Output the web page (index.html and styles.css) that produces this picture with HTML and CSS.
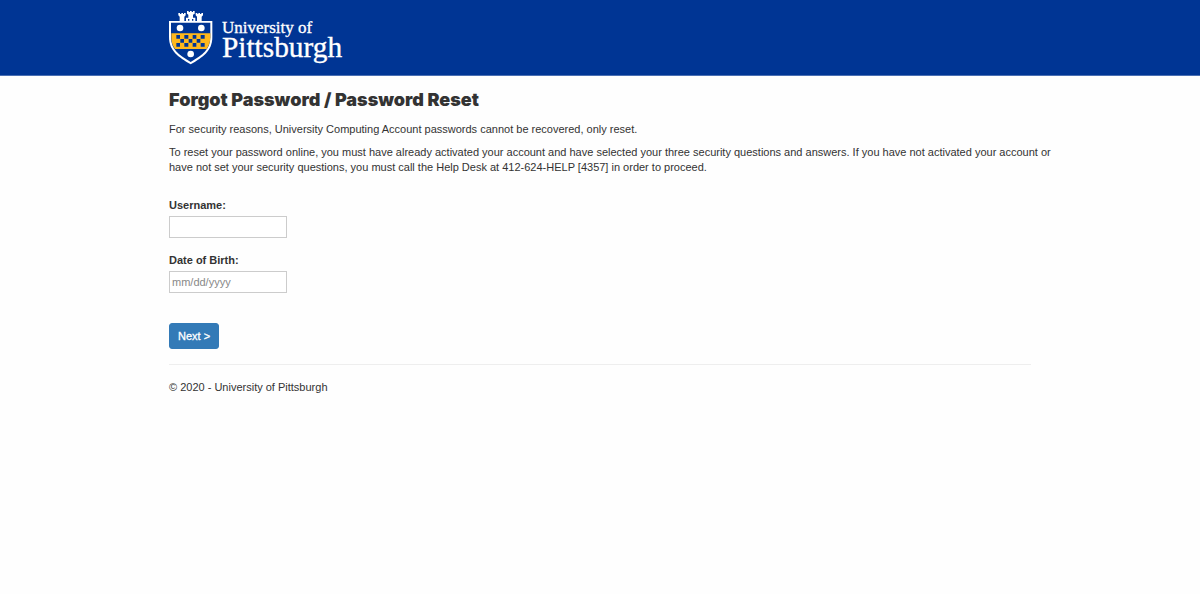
FILE: index.html
```html
<!DOCTYPE html>
<html lang="en">
<head>
<meta charset="utf-8">
<title>Forgot Password / Password Reset</title>
<link rel="stylesheet" href="styles.css">
</head>
<body>
<header class="site-header">
  <div class="container">
    <svg class="logo" viewBox="27 33 534 162" role="img" aria-label="University of Pittsburgh">
      <path fill="#fff" d="M27 63h130v48c0 42-28 60-65 82c-37-22-65-40-65-82z"/>
      <path fill="#fff" d="M55 39h5v3h4v-3h5v3h3v-3h5v7l-4 4v13H59V50l-4-4zM107 39h5v3h3v-3h5v3h4v-3h5v7l-4 4v13h-14V50l-4-4zM81 33h5v3h4v-3h5v3h4v-3h5v8l-5 3v9h7v11H78V53h7v-9l-4-3z"/>
      <path fill="#003594" d="M33 68h118v44c0 37-23 52-59 74C56 164 33 149 33 112z"/>
      <path fill="#ffb81c" d="M34 100h117v12c0 14-4 25-11 35H45c-8-10-11-21-11-35z"/>
      <path fill="#003594" d="M49 105h11v11H49zM73 105h12v11H73zM98 105h11v11H98zM122 105h12v11h-12zM61 117h11v11H61zM86 117h11v11H86zM110 117h11v11h-11zM49 129h11v11H49zM73 129h12v11H73zM98 129h11v11H98zM122 129h12v11h-12zM84 57h4v5h-4zM96 57h4v5h-4z"/>
      <g fill="#fff"><circle cx="60" cy="84" r="10"/><circle cx="124" cy="84" r="10"/><circle cx="92" cy="162" r="10"/></g>
      <text class="logo-text" x="186" y="100" font-size="51">University of</text>
      <text class="logo-text" x="186" y="171" font-size="88">Pittsburgh</text>
    </svg>
  </div>
</header>
<main class="container">
  <h1 class="title">Forgot Password / Password Reset</h1>
  <p class="text">For security reasons, University Computing Account passwords cannot be recovered, only reset.</p>
  <p class="text">To reset your password online, you must have already activated your account and have selected your three security questions and answers. If you have not activated your account or have not set your security questions, you must call the Help Desk at 412-624-HELP [4357] in order to proceed.</p>
  <form class="form">
    <div class="field">
      <label class="label" for="username">Username:</label>
      <input class="input" id="username" type="text">
    </div>
    <div class="field">
      <label class="label" for="dob">Date of Birth:</label>
      <input class="input" id="dob" type="text" placeholder="mm/dd/yyyy">
    </div>
    <button class="button" type="submit">Next &gt;</button>
  </form>
  <footer class="footer">© 2020 - University of Pittsburgh</footer>
</main>
</body>
</html>
```
FILE: styles.css
```css
* { box-sizing: border-box; }
body {
  margin: 0;
  background: #fefefe;
  color: #333;
  font: 11px/15px "Liberation Sans", Arial, sans-serif;
}
.container {
  max-width: 862px;
  margin: 0 auto;
}
.site-header {
  padding: 11px 0 10px;
  background: #003594;
  border-bottom: 1px solid #4a6fb3;
}
.logo { display: block; width: 178px; height: 54px; }
.logo-text { font-family: "Liberation Serif", "Times New Roman", serif; fill: #fff; stroke: #fff; stroke-width: 1; }
.title {
  margin: 14px 0 12px;
  font: 900 18px/20px Inter, "Arial Black", sans-serif;
}
.text { margin: 0 -20px 8px 0; }
.form {
  display: flex;
  flex-direction: column;
  align-items: flex-start;
  padding: 15px 0;
}
.field {
  display: flex;
  flex-direction: column;
  gap: 3px;
  margin-bottom: 15px;
}
.label { font-weight: bold; }
.input {
  width: 118px;
  height: 22px;
  padding: 2px;
  border: 1px solid #ccc;
  background: #fff;
  color: #333;
  font: inherit;
}
.input::placeholder { color: #888; }
.button {
  margin-top: 15px;
  padding: 5px 8px;
  height: 26px;
  border: 1px solid #337ab7;
  border-radius: 3px;
  background: #337ab7;
  color: #fff;
  font: inherit;
  line-height: 14px;
  -webkit-text-stroke: 0.3px #fff;
}
.footer {
  padding-top: 15px;
  border-top: 1px solid #eee;
}
```
